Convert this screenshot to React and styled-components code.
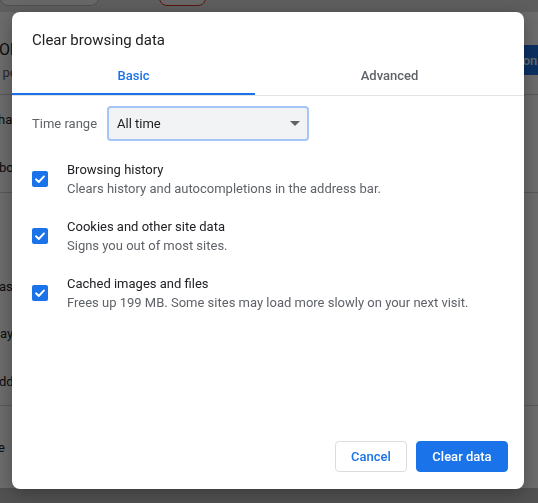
import React from "react"
import styled, { createGlobalStyle } from "styled-components"

const GlobalStyle = createGlobalStyle`
  html, body {
    margin: 0;
    padding: 0;
  }
  body {
    font-family: Roboto, "Liberation Sans", Arial, sans-serif;
    background: #e0e0e0;
    overflow: hidden;
  }
`

// the settings page that sits dimmed behind the dialog
const Page = styled.div`
  width: 538px;
  height: 503px;
  display: flex;
  flex-direction: column;
  overflow: hidden;
  background: #e0e0e0;
`

const TopStrip = styled.div`
  height: 12px;
  flex-shrink: 0;
  display: flex;
  gap: 60px;
  overflow: hidden;
`

const SearchBox = styled.div`
  flex-shrink: 0;
  width: ${p => p.$w}px;
  height: 24px;
  margin-top: -20px;
  border: 1px solid ${p => p.$accent ? "#d93025" : "#bdbdbd"};
  border-radius: 8px;
  background: #f5f5f5;
`

const Card = styled.div`
  flex: 1;
  background: #fff;
  display: flex;
  flex-direction: column;
`

const Row = styled.div`
  height: ${p => p.$h}px;
  flex-shrink: 0;
  display: flex;
  align-items: center;
  border-top: ${p => p.$line ? "1px solid #d0d0d0" : "none"};
  box-sizing: border-box;
  overflow: hidden;
  white-space: nowrap;
  font-size: 13px;
  color: #202124;
`

const HeaderRow = styled(Row)`
  align-items: flex-start;
  border-bottom: 1px solid #d0d0d0;
`

const Stack = styled.div`
  display: flex;
  flex-direction: column;
  flex-shrink: 0;
  width: 477px;
  padding-top: 28px;
`

const Name = styled.span`
  font-size: 16px;
  line-height: 20px;
  color: #202124;
  margin-left: ${p => p.$shift || 0}px;
`

const Sub = styled.span`
  font-size: 13px;
  line-height: 20px;
  margin-top: 3px;
  color: #5f6368;
  margin-left: ${p => p.$shift || 0}px;
`

const Fragment = styled.span`
  margin-left: ${p => p.$shift || 0}px;
`

const SyncButton = styled.div`
  flex-shrink: 0;
  margin-top: 33px;
  height: 30px;
  padding: 0 16px;
  display: flex;
  align-items: center;
  background: #1a73e8;
  color: #fff;
  font-weight: 500;
  font-size: 13px;
`

const BottomStrip = styled.div`
  height: 15px;
  flex-shrink: 0;
  background: #c0c0c0;
`

const Overlay = styled.div`
  position: fixed;
  inset: 0;
  background: rgba(0, 0, 0, 0.58);
`

// dialog
const Dialog = styled.div`
  position: fixed;
  top: 12px;
  left: 12px;
  width: 512px;
  height: 477px;
  background: #fff;
  border-radius: 8px;
  box-shadow: 0 4px 18px rgba(0, 0, 0, 0.3);
  display: flex;
  flex-direction: column;
  font-family: Roboto, "Liberation Sans", Arial, sans-serif;
  overflow: hidden;
`

const Title = styled.h2`
  margin: 0;
  padding: 18px 20px 0;
  font-size: 15px;
  line-height: 20px;
  font-weight: 400;
  color: #202124;
`

const Tabs = styled.div`
  display: flex;
  margin-top: 5px;
  border-bottom: 1px solid #e3e3e3;
`

const Tab = styled.div`
  width: ${p => p.$w ? `${p.$w}px` : "auto"};
  flex: ${p => p.$w ? "none" : 1};
  height: 40px;
  display: flex;
  align-items: center;
  justify-content: center;
  font-size: 13px;
  font-weight: 500;
  color: ${p => p.$active ? "#1a73e8" : "#5f6368"};
  box-shadow: ${p => p.$active ? "inset 0 -2px 0 #1a73e8" : "none"};
  cursor: pointer;
`

const Body = styled.div`
  padding: 10px 20px 0;
`

const TimeRow = styled.div`
  display: flex;
  align-items: center;
`

const TimeLabel = styled.span`
  width: 75px;
  font-size: 13px;
  color: #5f6368;
`

const Select = styled.div`
  width: 202px;
  height: 35px;
  box-sizing: border-box;
  border: 2px solid #a6c5f7;
  border-radius: 4px;
  background: #f1f3f4;
  display: flex;
  align-items: center;
  padding: 0 7px 0 8px;
  font-size: 13px;
  color: #202124;
`

const Arrow = styled.svg`
  margin-left: auto;
`

const Options = styled.div`
  margin-top: 10px;
`

const Option = styled.div`
  display: flex;
  align-items: center;
  gap: 19px;
  padding: 9px 0 10px;
`

const Box = styled.div`
  width: 16px;
  height: 16px;
  flex-shrink: 0;
  border-radius: 2px;
  background: #1a73e8;
  display: flex;
  align-items: center;
  justify-content: center;
`

const OptionText = styled.div`
  display: flex;
  flex-direction: column;
  font-size: 13px;
  line-height: 19px;
`

const OptionTitle = styled.span`
  color: #202124;
`

const OptionDesc = styled.span`
  color: #5f6368;
`

const Footer = styled.div`
  margin-top: auto;
  display: flex;
  justify-content: flex-end;
  gap: 9px;
  padding: 0 16px 17px;
`

const Button = styled.button`
  width: ${p => p.$w}px;
  height: 31px;
  border-radius: 4px;
  font-family: inherit;
  font-size: 13px;
  font-weight: 500;
  border: 1px solid ${p => p.$primary ? "#1a73e8" : "#dadce0"};
  background: ${p => p.$primary ? "#1a73e8" : "#fff"};
  color: ${p => p.$primary ? "#fff" : "#1a73e8"};
  cursor: pointer;
`

const options = [
  { title: "Browsing history", desc: "Clears history and autocompletions in the address bar." },
  { title: "Cookies and other site data", desc: "Signs you out of most sites." },
  { title: "Cached images and files", desc: "Frees up 199 MB. Some sites may load more slowly on your next visit." },
]

const Check = () => (
  <Box>
    <svg width="12" height="12" viewBox="0 0 12 12">
      <path d="M2 6.3 L4.8 9 L10 3.4" fill="none" stroke="#fff" strokeWidth="1.9" strokeLinecap="round" strokeLinejoin="round" />
    </svg>
  </Box>
)

const Backdrop = () => (
  <Page>
    <TopStrip>
      <SearchBox $w={97} />
      <SearchBox $w={45} $accent />
    </TopStrip>
    <Card>
      <HeaderRow $h={83}>
        <Stack>
          <Name $shift={-1}>Oliver</Name>
          <Sub $shift={-4}>i people</Sub>
        </Stack>
        <SyncButton>Turn on sync...</SyncButton>
      </HeaderRow>
      <Row $h={48}><Fragment $shift={-2}>hain</Fragment></Row>
      <Row $h={49}><Fragment $shift={-1}>bookmarks</Fragment></Row>
      <Row $h={71} $line />
      <Row $h={47}><Fragment $shift={-1}>asswords</Fragment></Row>
      <Row $h={47}><Fragment>ayments</Fragment></Row>
      <Row $h={48}><Fragment $shift={-1}>ddresses</Fragment></Row>
      <Row $h={83} $line><Fragment $shift={-2}>e</Fragment></Row>
    </Card>
    <BottomStrip />
  </Page>
)

export default function App() {
  return (
    <>
      <GlobalStyle />
      <Backdrop />
      <Overlay />
      <Dialog>
        <Title>Clear browsing data</Title>
        <Tabs>
          <Tab $w={243} $active>Basic</Tab>
          <Tab>Advanced</Tab>
        </Tabs>
        <Body>
          <TimeRow>
            <TimeLabel>Time range</TimeLabel>
            <Select>
              All time
              <Arrow width="10" height="5" viewBox="0 0 10 5">
                <path d="M0 0 L10 0 L5 5 Z" fill="#5f6368" />
              </Arrow>
            </Select>
          </TimeRow>
          <Options>
            {options.map(o => (
              <Option key={o.title}>
                <Check />
                <OptionText>
                  <OptionTitle>{o.title}</OptionTitle>
                  <OptionDesc>{o.desc}</OptionDesc>
                </OptionText>
              </Option>
            ))}
          </Options>
        </Body>
        <Footer>
          <Button $w={72}>Cancel</Button>
          <Button $w={92} $primary>Clear data</Button>
        </Footer>
      </Dialog>
    </>
  )
}
